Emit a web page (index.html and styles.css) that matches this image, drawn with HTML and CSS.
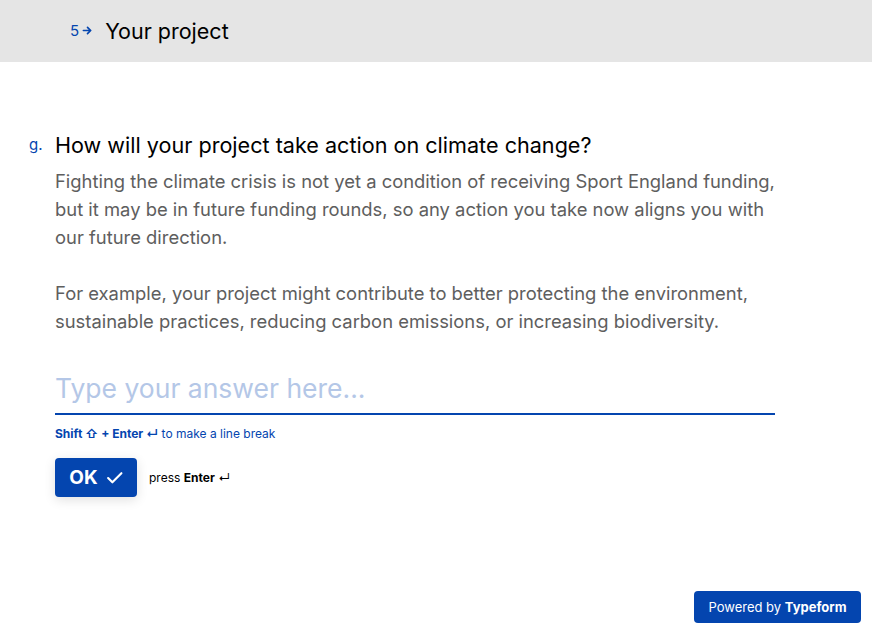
FILE: index.html
```html
<!DOCTYPE html>
<html>
<head>
<meta charset="utf-8">
<link rel="stylesheet" href="styles.css">
</head>
<body>
<header class="header">
  <span class="step">5<svg class="step-arrow" viewBox="0 0 12 12" width="11" height="11"><path d="M1.5 6h8M6 2.5 9.5 6 6 9.5" fill="none" stroke="currentColor" stroke-width="1.8" stroke-linecap="round" stroke-linejoin="round"/></svg></span>
  <span class="header-title">Your project</span>
</header>
<main class="main">
  <div class="question">
    <span class="q-num">g.</span>
    <div class="q-body">
      <h1 class="q-title">How will your project take action on climate change?</h1>
      <p class="q-desc">Fighting the climate crisis is not yet a condition of receiving Sport England funding, but it may be in future funding rounds, so any action you take now aligns you with our future direction.</p>
      <p class="q-desc q-desc-2">For example, your project might contribute to better protecting the environment, sustainable practices, reducing carbon emissions, or increasing biodiversity.</p>
      <div class="answer">Type your answer here...</div>
      <div class="hint"><b>Shift ⇧ + Enter ↵</b> to make a line break</div>
      <div class="actions">
        <button class="ok">OK <svg viewBox="0 0 16 16" width="17" height="17"><path d="M2 8.5 6 12.5 14.5 4" fill="none" stroke="#fff" stroke-width="2" stroke-linecap="round" stroke-linejoin="round"/></svg></button>
        <span class="press">press <b>Enter</b> ↵</span>
      </div>
    </div>
  </div>
</main>
<a class="powered"><span>Powered by&nbsp;</span><b>Typeform</b></a>
</body>
</html>
```
FILE: styles.css
```css
* { box-sizing: border-box; }
html, body { margin: 0; padding: 0; }
body {
  width: 872px;
  height: 631px;
  background: #fff;
  font-family: Inter, "Liberation Sans", Arial, sans-serif;
  color: #000;
  position: relative;
  overflow: hidden;
}
.header {
  height: 62px;
  background: #e5e5e5;
  display: flex;
  align-items: center;
  padding-left: 70px;
}
.step {
  color: #0445af;
  font-size: 15px;
  display: flex;
  align-items: center;
  gap: 3px;
  margin-right: 12px;
  margin-top: -1px;
}
.step-arrow { color: #0445af; }
.header-title {
  font-size: 21.5px;
  color: #000;
}
.main {
  padding-top: 68px;
}
.question {
  display: flex;
  padding-left: 29px;
}
.q-num {
  color: #0445af;
  font-size: 15px;
  width: 26px;
  padding-top: 5px;
}
.q-body { width: 726px; }
.q-title {
  font-size: 21.6px;
  font-weight: normal;
  line-height: 30px;
  margin: 0 0 7px;
}
.q-desc {
  margin: 0;
  font-size: 18.4px;
  line-height: 28px;
  color: #5e5e5e;
}
.q-desc-2 { margin-top: 28px; }
.answer {
  width: 720px;
  margin-top: 33px;
  font-size: 26.5px;
  line-height: 40px;
  color: #b4c7e7;
  padding-bottom: 5px;
  border-bottom: 2px solid #0445af;
}
.hint {
  margin-top: 11px;
  font-size: 12px;
  color: #0445af;
}
.actions {
  display: flex;
  align-items: center;
  margin-top: 17px;
}
.ok {
  width: 82px;
  height: 39px;
  border: none;
  border-radius: 4px;
  background: #0445af;
  color: #fff;
  font-family: Inter, "Liberation Sans", Arial, sans-serif;
  font-size: 19px;
  font-weight: bold;
  display: flex;
  align-items: center;
  justify-content: center;
  gap: 8px;
  box-shadow: 0 3px 12px rgba(0,0,0,0.12);
  padding: 0;
}
.press {
  margin-left: 12px;
  font-size: 12px;
  color: #000;
}
.powered {
  position: absolute;
  left: 694px;
  top: 591px;
  width: 167px;
  height: 32px;
  background: #0445af;
  color: #fff;
  border-radius: 4px;
  font-size: 13px;
  display: flex;
  align-items: center;
  justify-content: center;
}
```
